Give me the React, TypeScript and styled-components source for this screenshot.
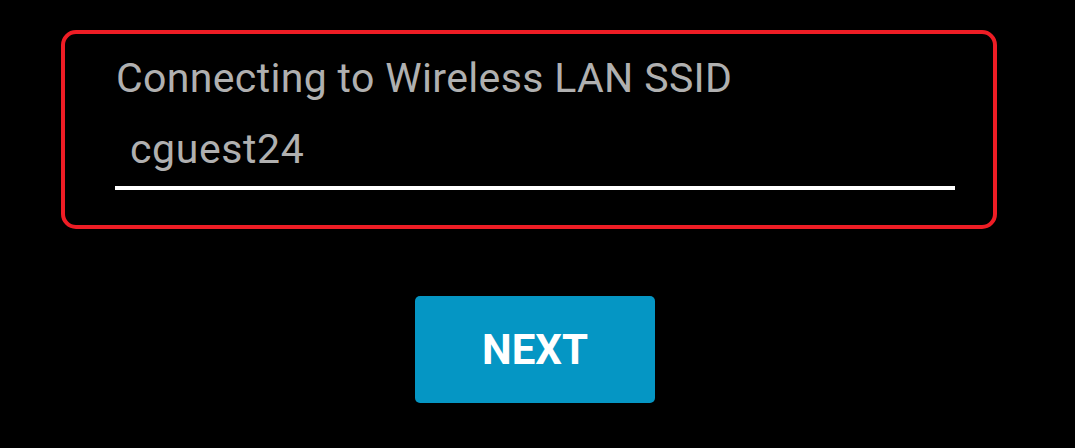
import React from 'react'
import styled, { createGlobalStyle } from 'styled-components';

const GlobalStyle = createGlobalStyle`
    html, body {
        margin: 0;
        padding: 0;
        background: #000;
    }
    body {
        font-family: Roboto, "Liberation Sans", sans-serif;
        width: 1075px;
        height: 448px;
        overflow: hidden;
    }
`;

const Page = styled.div`
    display: flex;
    flex-direction: column;
    padding: 30px 78px 0 61px;
`;

const Frame = styled.div`
    border: 4px solid #ee1d25;
    border-radius: 15px;
    padding: 20px 38px 35px 50px;
    display: flex;
    flex-direction: column;
    gap: 23px;
`;

const Label = styled.div`
    color: #b0b0b0;
    font-size: 41px;
    line-height: 48px;
    letter-spacing: 0.35px;
    padding-left: 1px;
`;

const Field = styled.div`
    color: #b0b0b0;
    font-size: 41px;
    line-height: 48px;
    letter-spacing: 0.6px;
    padding: 0 0 13px 15px;
    border-bottom: 4px solid #fff;
`;

const Actions = styled.div`
    display: flex;
    justify-content: flex-start;
    padding: 67px 0 0 ${415 - 61}px;
`;

const Button = styled.button`
    width: 240px;
    height: 107px;
    border: none;
    border-radius: 5px;
    background: #0596c4;
    color: #fff;
    font-family: Roboto, "Liberation Sans", sans-serif;
    font-weight: 700;
    font-size: 42px;
    padding: 0;
`;

export default function App() {
    return <Page>
        <GlobalStyle />
        <Frame>
            <Label>Connecting to Wireless LAN SSID</Label>
            <Field>cguest24</Field>
        </Frame>
        <Actions>
            <Button>NEXT</Button>
        </Actions>
    </Page>
}
